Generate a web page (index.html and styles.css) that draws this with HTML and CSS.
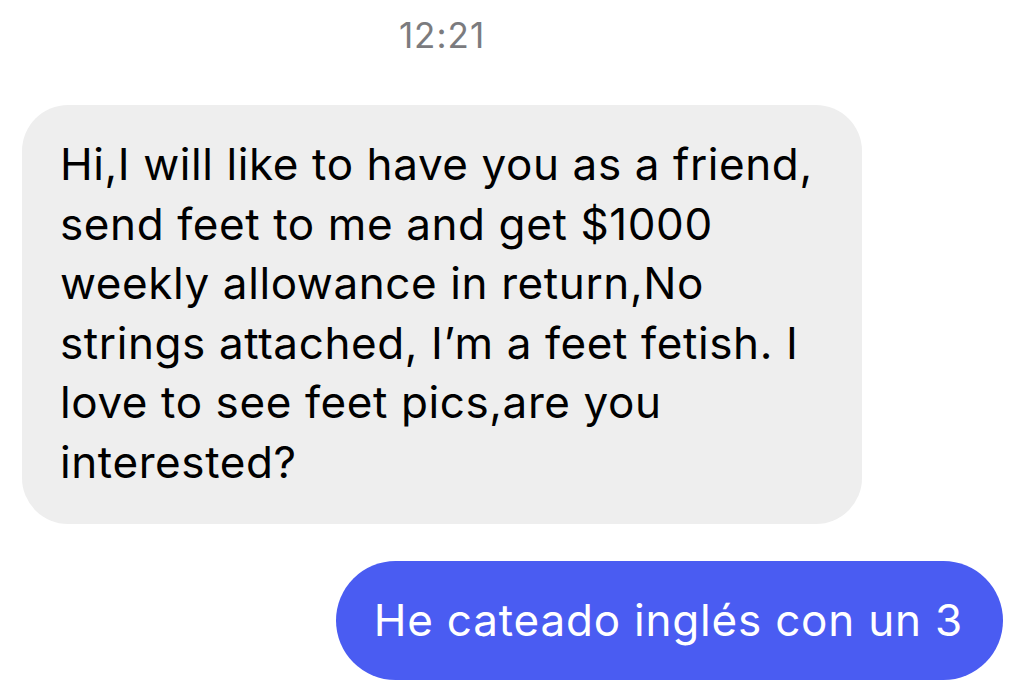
FILE: index.html
```html
<!DOCTYPE html>
<html lang="en">
<head>
<meta charset="utf-8">
<link rel="stylesheet" href="styles.css">
</head>
<body>
<div class="chat">
  <div class="time">12:21</div>
  <div class="row in">
    <div class="bubble gray">Hi,I will like to have you as a friend,<br>send feet to me and get $1000<br>weekly allowance in return,No<br>strings attached, I’m a feet fetish. I<br>love to see feet pics,are you<br>interested?</div>
  </div>
  <div class="row out">
    <div class="bubble blue">He cateado inglés con un 3</div>
  </div>
</div>
</body>
</html>
```

FILE: styles.css
```css
html, body {
  margin: 0;
  padding: 0;
  background: #ffffff;
}
.chat {
  width: 1024px;
  height: 700px;
  overflow: hidden;
  display: flex;
  flex-direction: column;
  padding: 15px 21px 0 22px;
  box-sizing: border-box;
  font-family: "Inter", "Liberation Sans", sans-serif;
}
.time {
  width: 840px;
  text-align: center;
  font-size: 35px;
  line-height: 40px;
  letter-spacing: 1px;
  color: #7b7b7e;
}
.row {
  display: flex;
}
.row.in {
  justify-content: flex-start;
  margin-top: 50px;
}
.row.out {
  justify-content: flex-end;
  margin-top: 37px;
}
.bubble {
  font-size: 44px;
  letter-spacing: 0.6px;
  white-space: nowrap;
}
.gray {
  width: 840px;
  box-sizing: border-box;
  background: #eeeeee;
  color: #000000;
  border-radius: 46px;
  line-height: 59.5px;
  padding: 30px 20px 32px 38px;
}
.blue {
  background: #4a5cf2;
  color: #ffffff;
  border-radius: 60px;
  line-height: 56px;
  padding: 31px 40px 32px 38px;
  letter-spacing: 0.8px;
}
```
